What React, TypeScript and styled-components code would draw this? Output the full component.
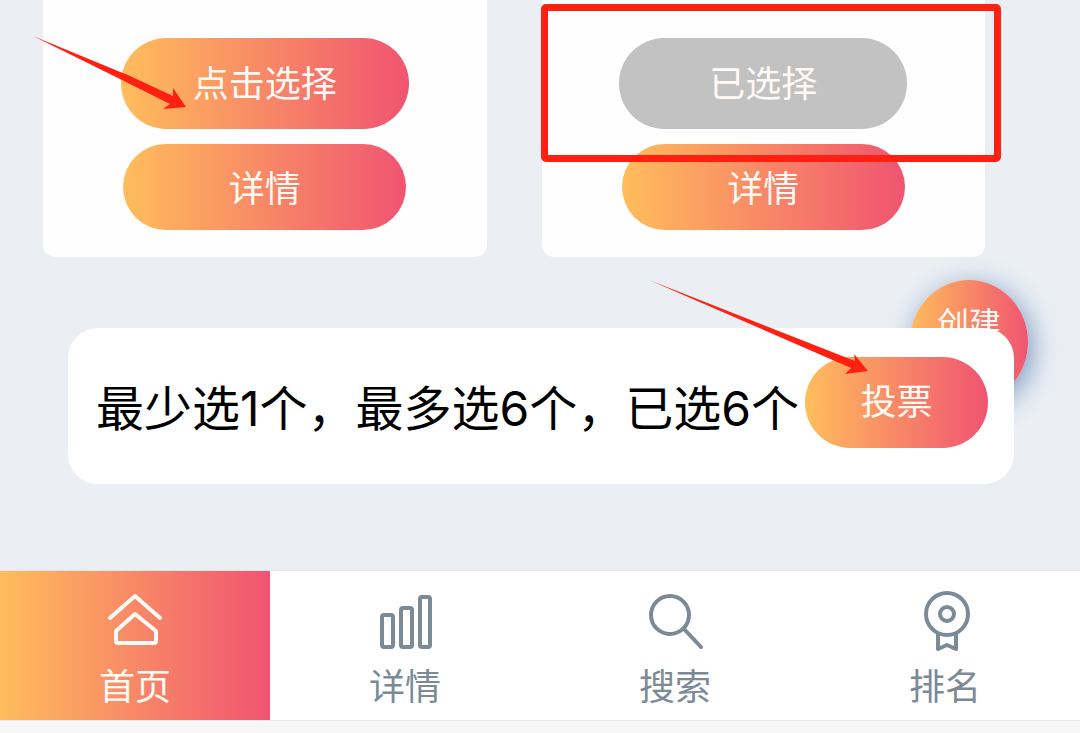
import React from "react";
import styled, { createGlobalStyle } from "styled-components";

const warm = "linear-gradient(90deg, #ffbd5c, #f05471)";
const slate = "#7b8a97";

const GlobalStyle = createGlobalStyle`
  * { box-sizing: border-box; }
  body { margin: 0; background: #ebeff4; }
  button { font: inherit; border: 0; cursor: pointer; }
`;

const Page = styled.div`
  position: relative;
  min-height: 100vh;
  display: flex;
  flex-direction: column;
  overflow: hidden;
  background: #ebeff4;
  font-family: "Noto Sans CJK SC", sans-serif;
`;

const Cards = styled.main`
  display: grid;
  grid-template-columns: 1fr 1fr;
  gap: 55px;
  padding: 0 95px 0 43px;
`;

const Card = styled.article`
  position: relative;
  display: flex;
  flex-direction: column;
  align-items: center;
  gap: 15px;
  padding: 38px 0 27px;
  background: #fefefe;
  border-radius: 0 0 12px 12px;
`;

const Pill = styled.button<{ $muted?: boolean; $size?: "choice" | "detail" | "vote" }>`
  flex: none;
  width: ${(p) => (p.$size === "vote" ? 183 : p.$size === "detail" ? 283 : 288)}px;
  height: ${(p) => (p.$size === "detail" ? 86 : 91)}px;
  padding: 0 0 ${(p) => (p.$size === "detail" ? 2 : 6)}px;
  border-radius: 46px;
  background: ${(p) => (p.$muted ? "#c2c2c2" : warm)};
  color: #fffaf6;
  font-size: 36px;
  line-height: 48px;
`;

const VoteArea = styled.section`
  position: relative;
  margin: 71px 66px 86px 68px;
`;

const VotePanel = styled.div`
  position: relative;
  display: flex;
  align-items: center;
  justify-content: space-between;
  min-height: 156px;
  padding: 0 26px 8px 28px;
  background: #fff;
  border-radius: 30px;
`;

const VoteText = styled.p`
  margin: 0;
  padding-top: 14px;
  color: #000;
  font-family: Inter, "Noto Sans CJK SC", sans-serif;
  font-size: 48px;
  line-height: 64px;
  white-space: nowrap;
`;

const CreateButton = styled.button`
  position: absolute;
  top: -48px;
  right: -14px;
  width: 118px;
  height: 124px;
  padding: 0 0 42px;
  border-radius: 50%;
  background: ${warm};
  box-shadow: 4px 6px 28px #7c98c0;
  color: #fffaf6;
  font-size: 32px;
  line-height: 40px;
`;

const TabBar = styled.nav`
  display: grid;
  grid-template-columns: repeat(4, 1fr);
  background: #fff;
  border-top: 1px solid #e2e5e9;
  border-bottom: 1px solid #e8e8e8;
`;

const Tab = styled.a<{ $active?: boolean }>`
  display: flex;
  flex-direction: column;
  align-items: center;
  gap: 5px;
  padding: 20px 0 12px;
  background: ${(p) => (p.$active ? warm : "transparent")};
  color: ${(p) => (p.$active ? "#fffaf6" : slate)};
  font-size: 36px;
  line-height: 48px;
  text-decoration: none;
`;

const Icon = styled.svg`
  width: 64px;
  height: 64px;
  fill: none;
  stroke: currentColor;
  stroke-width: 4;
  stroke-linecap: round;
  stroke-linejoin: round;
`;

const BottomStrip = styled.div`
  flex: 1;
  min-height: 12px;
  background: #f6f6f6;
`;

const Highlight = styled.div`
  position: absolute;
  top: 4px;
  left: -1px;
  right: -16px;
  height: 158px;
  border: 7px solid #ff2011;
  border-radius: 5px;
  pointer-events: none;
`;

const Arrow = styled.svg<{ $x: number; $y: number }>`
  position: absolute;
  left: ${(p) => p.$x}px;
  top: ${(p) => p.$y}px;
  fill: #ff2011;
  pointer-events: none;
`;

const tabs = [
  {
    label: "首页",
    icon: (
      <>
        <path d="M7 27 32 5l25 22" />
        <path d="M13 40 32 23l21 17v10q0 2-2 2H15q-2 0-2-2Z" />
      </>
    ),
  },
  {
    label: "详情",
    icon: (
      <>
        <rect x="9" y="24" width="11" height="32" rx="2" />
        <rect x="28" y="17" width="11" height="39" rx="2" />
        <rect x="47" y="6" width="10" height="50" rx="2" />
      </>
    ),
  },
  {
    label: "搜索",
    icon: (
      <>
        <circle cx="27" cy="24" r="19" />
        <path d="m41 38 17 18" />
      </>
    ),
  },
  {
    label: "排名",
    icon: (
      <>
        <circle cx="34" cy="23" r="21" />
        <circle cx="34" cy="23" r="7" />
        <path d="M25 43v15l9-4 9 4V43" />
      </>
    ),
  },
];

export default function App() {
  return (
    <Page>
      <GlobalStyle />
      <Cards>
        <Card>
          <Pill>点击选择</Pill>
          <Pill $size="detail">详情</Pill>
        </Card>
        <Card>
          <Pill $muted>已选择</Pill>
          <Pill $size="detail">详情</Pill>
          <Highlight />
        </Card>
      </Cards>
      <VoteArea>
        <CreateButton>创建</CreateButton>
        <VotePanel>
          <VoteText>最少选1个，最多选6个，已选6个</VoteText>
          <Pill $size="vote">投票</Pill>
        </VotePanel>
      </VoteArea>
      <TabBar>
        {tabs.map((tab, i) => (
          <Tab key={tab.label} href="#" $active={i === 0}>
            <Icon viewBox="0 0 64 64" aria-hidden="true">{tab.icon}</Icon>
            {tab.label}
          </Tab>
        ))}
      </TabBar>
      <BottomStrip />
      <Arrow $x={32} $y={36} width="156" height="76" viewBox="0 0 156 76" aria-hidden="true">
        <path d="M1 0 98 40 141 60V52L154 71 131 73 138 68 86 42Z" />
      </Arrow>
      <Arrow $x={648} $y={279} width="222" height="98" viewBox="0 0 222 98" aria-hidden="true">
        <path d="M1 1 207 82 206 75 220 92 197 95 203 89Z" />
      </Arrow>
    </Page>
  );
}
